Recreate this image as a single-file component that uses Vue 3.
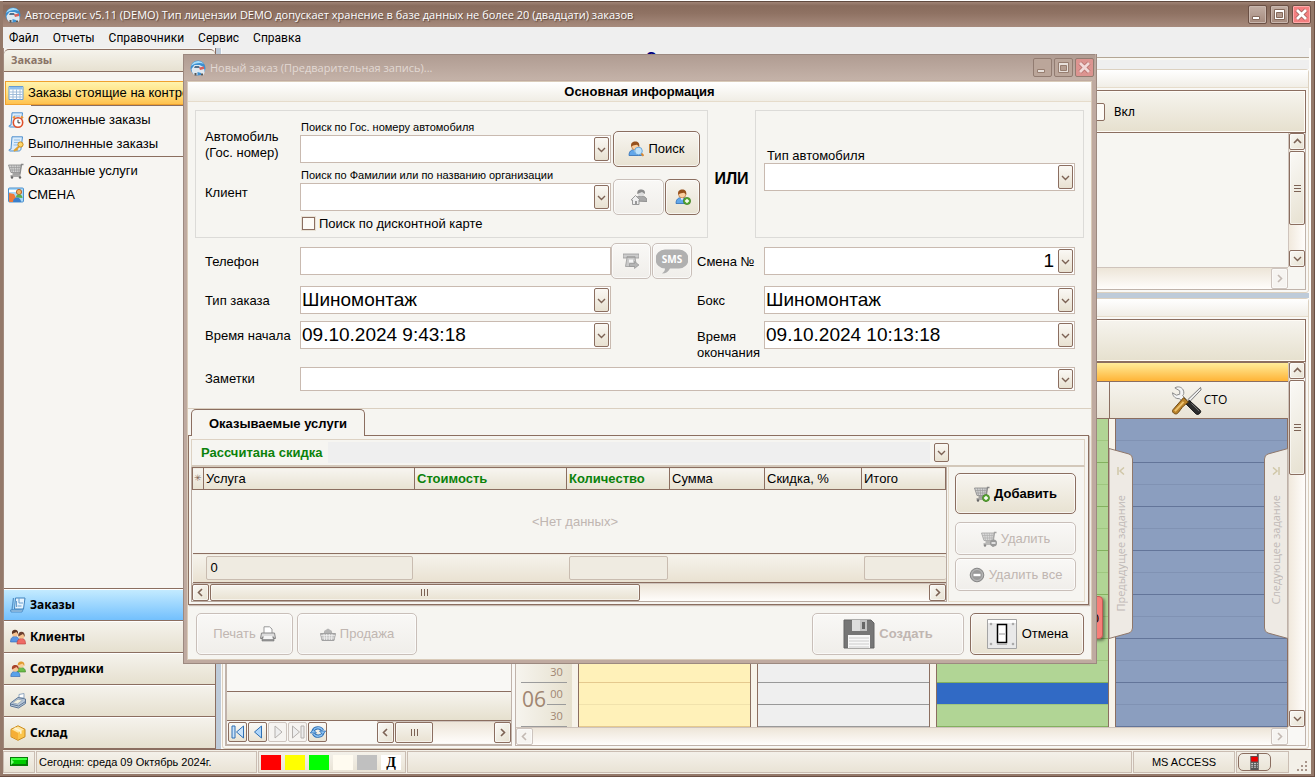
<script setup>
import { ref } from 'vue'

const menu = ['Файл', 'Отчеты', 'Справочники', 'Сервис', 'Справка']
const modules = [
  { id: 'orders', label: 'Заказы', active: true },
  { id: 'clients', label: 'Клиенты' },
  { id: 'staff', label: 'Сотрудники' },
  { id: 'cash', label: 'Касса' },
  { id: 'stock', label: 'Склад' },
]
const hours = ['05', '06']
const resources = [
  { id: 'yellow', label: '' },
  { id: 'gray', label: '' },
  { id: 'green', label: '', selected: 13 },
  { id: 'blue', label: 'СТО' },
]
const swatches = ['red', 'amber', 'lime', 'ivory', 'silver']
const columns = [
  { label: 'Услуга', w: 'c-service' },
  { label: 'Стоимость', w: 'c-cost', strong: true },
  { label: 'Количество', w: 'c-count', strong: true },
  { label: 'Сумма', w: 'c-sum' },
  { label: 'Скидка, %', w: 'c-disc' },
  { label: 'Итого', w: 'c-total' },
]
const discount = ref(false)
const enabled = ref(false)
</script>

<template>
  <div class="screen">
    <svg class="defs" aria-hidden="true">
      <symbol id="down" viewBox="0 0 9 9"><path d="M1 3l3.5 3.5L8 3" fill="none" stroke="currentColor" stroke-width="1.4" /></symbol>
      <symbol id="up" viewBox="0 0 9 9"><path d="M1 6l3.5-3.5L8 6" fill="none" stroke="currentColor" stroke-width="1.6" /></symbol>
      <symbol id="left" viewBox="0 0 9 9"><path d="M6 1L2.5 4.5 6 8" fill="none" stroke="currentColor" stroke-width="1.6" /></symbol>
      <symbol id="right" viewBox="0 0 9 9"><path d="M3 1l3.5 3.5L3 8" fill="none" stroke="currentColor" stroke-width="1.6" /></symbol>
      <symbol id="grip" viewBox="0 0 7 7"><path d="M0 .5h7M0 3.5h7M0 6.5h7" stroke="currentColor" fill="none" /></symbol>
      <symbol id="logo" viewBox="0 0 16 16">
        <circle cx="8" cy="8" r="7.5" fill="#3d8fd0" />
        <path d="M1 6a7.500 7.500 0 0 1 13-2C10 2 5 3 1 6z" fill="#a8dcf8" />
        <path d="M1.500 9l3-4h5l4 2 1 3v3l-1.500 2.500h-2V13l-3.500-1v3H4l-2-3z" fill="#dfe8ef" />
        <path d="M5 6h4l1 2H4z" fill="#53718c" />
        <path d="M9 7.500l5-1v2.500l-4 1z" fill="#d9605a" />
        <path d="M4.500 13h2v2.500h-2zM11 13.500h2v2h-2z" fill="#555" />
      </symbol>
      <symbol id="min" viewBox="0 0 15 15"><path d="M2.5 9.500h7v3h-7z" fill="#fff" stroke="#84695b" /></symbol>
      <symbol id="max" viewBox="0 0 15 15"><path d="M2.500 2.500h10v10h-10z" fill="#fff" stroke="#84695b" /><path d="M4.500 5.500h6v5h-6z" fill="#b39a8d" stroke="#84695b" /></symbol>
      <symbol id="close" viewBox="0 0 15 15"><path d="M3 3l9 9M12 3L3 12" stroke="#a4605c" stroke-width="4.500" /><path d="M3 3l9 9M12 3L3 12" stroke="#fff" stroke-width="2.800" /></symbol>
      <symbol id="cart" viewBox="0 0 16 16">
        <path d="M15.500 1.500h-2l-1.500 9.500H4.500" fill="none" stroke="#888" stroke-width="1.300" />
        <path d="M.5 2h12.500l-1 7.500H3z" fill="#d2d2d2" stroke="#858585" stroke-width=".8" />
        <path d="M3.500 2l1 7.500M6 2l.7 7.500M8.500 2l.3 7.500M11 2l-.3 7.500M1.200 4.500h11.500M2 7h10.300" stroke="#999" stroke-width=".7" />
        <path d="M2.500 13h10" stroke="#888" stroke-width="1.400" />
        <circle cx="4" cy="14.500" r="1.200" fill="#666" /><circle cx="12" cy="14.500" r="1.200" fill="#666" />
      </symbol>
      <symbol id="man" viewBox="0 0 16 16">
        <path d="M1 14.500c0-4 2-6 6-6s6.500 2 6.500 6z" fill="#62a7ea" stroke="#2e6db5" stroke-width=".8" />
        <path d="M5.500 8.500L7 11.500l1.700-3z" fill="#fff" />
        <circle cx="7.200" cy="5.200" r="3.700" fill="#fbcf9f" stroke="#a9632b" stroke-width=".6" />
        <path d="M3.200 5.700C2.600 2 4.600.6 7.300.6S11.800 2.300 11.200 5.700C10 4.700 9.500 3.900 9 3.700 7 4.200 5 3.900 3.200 5.700z" fill="#96501c" />
      </symbol>
      <symbol id="page" viewBox="0 0 16 16">
        <path d="M4 .8h10.500l-1.500 12c-.2 1.500-1 2.200-2.500 2.200H2c-1.200 0-1.500-1.500 0-1.800h1z" fill="#dcecfb" stroke="#4d8fce" />
        <path d="M6 4h6M6 6.500h5.500M5.500 9h5" stroke="#8fbce6" />
      </symbol>
    </svg>

    <div class="app">
      <header class="titlebar">
        <svg class="i16"><use href="#logo" /></svg>
        <h1>Автосервис v5.11 (DEMO) Тип лицензии DEMO допускает хранение в базе данных не более 20 (двадцати) заказов</h1>
        <div class="winbtns">
          <button aria-label="Свернуть"><svg><use href="#min" /></svg></button>
          <button aria-label="Развернуть"><svg><use href="#max" /></svg></button>
          <button class="close" aria-label="Закрыть"><svg><use href="#close" /></svg></button>
        </div>
      </header>
      <nav class="menu"><button v-for="m in menu" :key="m">{{ m }}</button></nav>

      <div class="work">
        <aside class="side">
          <h2>Заказы</h2>
          <div class="links">
            <a href="#" class="on">
              <svg class="i16" viewBox="0 0 16 16"><path d="M1 1.500h14v13H1z" fill="#fff" stroke="#659bd2" /><path d="M1.500 2h13v2.500h-13z" fill="#8fc0ee" /><path d="M1.500 7h13M1.500 9.500h13M1.500 12h13M5 4.500v10M8.500 4.500v10M12 4.500v10" stroke="#9ab7d6" stroke-width=".9" /></svg>
              Заказы стоящие на контроле</a>
            <hr />
            <a href="#"><svg class="i16" viewBox="0 0 16 16"><use href="#page" /><circle cx="10" cy="10.500" r="4.700" fill="#fff" stroke="#e0512b" stroke-width="1.600" /><path d="M10 7.800v3h2.300" fill="none" stroke="#333" /><path d="M5 6l2-1.500M15 6l-2-1.500" stroke="#f0912b" stroke-width="2" /></svg>Отложенные заказы</a>
            <a href="#"><svg class="i16" viewBox="0 0 16 16"><use href="#page" /><circle cx="12.500" cy="8.500" r="2.600" fill="#ffd668" stroke="#c98a1c" /><path d="M11 10.500l-5 4.500M8 12.500l1.500 2" stroke="#e0a02e" stroke-width="2" /></svg>Выполненные заказы</a>
            <hr />
            <a href="#"><svg class="i16"><use href="#cart" /></svg>Оказанные услуги</a>
            <a href="#"><svg class="i16" viewBox="0 0 16 16"><rect x=".5" y="1" width="15" height="14" rx="1" fill="#a9d8f8" stroke="#4a8fcd" /><path d="M1 3h8v2H1z" fill="#fff" /><path d="M1 6l5 1 2 4-3 4H1z" fill="#ee7a3a" /><circle cx="11" cy="5" r="2.600" fill="#f5b35c" stroke="#b7632a" /><path d="M8 10.500c0-2 1-3 3-3s3.500 1 3.500 3.500z" fill="#5fae4a" /><path d="M5 15c0-3 2-4.500 4-4.500s4 1.500 4 4.500z" fill="#3b7fcc" /></svg>СМЕНА</a>
          </div>
          <nav class="modules">
            <button v-for="m in modules" :key="m.id" :class="{ active: m.active }">
              <svg v-if="m.id === 'orders'" class="i16" viewBox="0 0 16 16"><path d="M5.500 1H15l-1.500 11h-9z" fill="#e6f3fd" stroke="#3f82bd" /><path d="M3.500 1L2 13l10 .5" fill="none" stroke="#5794c8" stroke-width="1.300" /><path d="M.5 13h11l2-1.500L12 15H1z" fill="#b3d5ef" stroke="#3f82bd" stroke-width=".8" /><path d="M9 1v5h4M6.500 4v6M7.500 9h4" stroke="#699fce" fill="none" /></svg>
              <svg v-else-if="m.id === 'clients'" class="i16" viewBox="0 0 16 16"><path d="M.5 13c0-4 2-5.500 4.500-5.500S9 9 9 13z" fill="#5a96e4" stroke="#2e62b0" stroke-width=".6" /><path d="M7 15c0-4 2-5.500 4.500-5.500s4 1.500 4 5.500z" fill="#ee6b66" stroke="#b73a36" stroke-width=".6" /><circle cx="5" cy="4.500" r="3" fill="#f6c390" /><path d="M2 5C1.500 2 3 .8 5 .8S8.500 2 8 5L6.500 3z" fill="#5b3524" /><circle cx="11.500" cy="6.500" r="3" fill="#f6c390" /><path d="M8.300 7.500c-.5-3 1-4.700 3.200-4.700S15 4.500 14.700 8L13 5z" fill="#6d4131" /></svg>
              <svg v-else-if="m.id === 'staff'" class="i16" viewBox="0 0 16 16"><path d="M7 11c0-4 2-4.500 4-4.500s4.500 1 4.500 4.500z" fill="#6cbd4a" stroke="#3c8426" stroke-width=".6" /><circle cx="11" cy="4" r="2.800" fill="#f9cf98" /><path d="M7.700 4.500C7.500 1.500 9 .4 11 .4S15 1.500 14.300 5L12.500 2.500z" fill="#e09a2f" /><path d="M.8 15.500c0-4 2-5 4.500-5s4.700 1 4.700 5z" fill="#5aa2ea" stroke="#2e62b0" stroke-width=".6" /><circle cx="5.300" cy="7.800" r="3" fill="#f8c796" /><path d="M2 8.500C1.500 5 3 4 5.300 4S9 5 8.600 8.500L6.500 6z" fill="#a9442a" /></svg>
              <svg v-else-if="m.id === 'cash'" class="i16" viewBox="0 0 16 16"><path d="M9 5V1.500l5-1V5z" fill="#fff" stroke="#8fa5bd" /><path d="M.5 10L8 4.500l7.500 1.500v4.500L8.500 15 .5 13z" fill="#b9c7d7" stroke="#5e7796" /><path d="M2.500 9.700l5.500-3.500 4.500 1-5 3.800z" fill="#f4f1de" stroke="#7f95ae" stroke-width=".6" /><path d="M.5 11l8 2 7-4.500" stroke="#5e7796" fill="none" /></svg>
              <svg v-else class="i16" viewBox="0 0 16 16"><path d="M8 .8l7 3.500v7.500L8 15.300 1 11.800V4.300z" fill="#fbc54c" stroke="#c98a1e" /><path d="M8 1.500l6 3L8 7.800l-6-3.300z" fill="#fee6a4" /><path d="M8 8v7l-6.500-3.500V4.700z" fill="#f5ae36" /><path d="M4.500 3l6.300 3.200v2.500" stroke="#fff5d5" stroke-width="1.500" fill="none" /></svg>
              {{ m.label }}
            </button>
          </nav>
        </aside>

        <main class="main">
          <div class="caption"><strong>С</strong></div>

          <section class="panel upper">
            <div class="panel-title"></div>
            <div class="box">
              <div class="toolbar"><label class="enable"><input type="checkbox" v-model="enabled" />Вкл</label></div>
              <div class="list">
                <div class="canvas"></div>
                <div class="vscroll">
                  <button aria-label="Вверх"><svg><use href="#up" /></svg></button>
                  <div class="thumb t1"><svg><use href="#grip" /></svg></div>
                  <div class="track"></div>
                  <button aria-label="Вниз"><svg><use href="#down" /></svg></button>
                </div>
                <div class="hscroll tall off"><div class="track"></div><button disabled aria-label="Вправо"><svg><use href="#right" /></svg></button></div>
              </div>
            </div>
          </section>

          <div class="hsplit"></div>

          <section class="panel lower">
            <div class="panel-title"></div>
            <div class="box bare"><div class="toolbar"></div></div>
            <div class="split">
              <div class="grid">
                <div class="grid-body"></div>
                <div class="grid-foot"></div>
                <div class="navigator">
                  <button aria-label="Первая"><svg viewBox="0 0 16 16"><path d="M2 2h3v12H2zM13.500 2v12l-7-6z" fill="#c9e3fb" stroke="#2e6fb3" /></svg></button>
                  <button aria-label="Назад"><svg viewBox="0 0 16 16"><path d="M11.500 2v12l-7-6z" fill="#aed6fb" stroke="#2e6fb3" /></svg></button>
                  <button disabled aria-label="Вперёд"><svg viewBox="0 0 16 16"><path d="M5 2v12l7-6z" fill="#eee" stroke="#b4b0ad" /></svg></button>
                  <button disabled aria-label="Последняя"><svg viewBox="0 0 16 16"><path d="M2.500 2v12l7-6zM11 2h3v12h-3z" fill="#eee" stroke="#b4b0ad" /></svg></button>
                  <button aria-label="Обновить"><svg viewBox="0 0 16 16"><path d="M3 7.500a5 4.500 0 0 1 9.500-1M13 8.500a5 4.500 0 0 1-9.500 1" fill="none" stroke="#2e6fb3" stroke-width="3.200" /><path d="M3 7.500a5 4.500 0 0 1 9.500-1M13 8.500a5 4.500 0 0 1-9.500 1" fill="none" stroke="#8fc4f4" stroke-width="1.400" /><path d="M9.500 7h6.200l-3 3.500zM.3 9h6.200L3.300 5.500z" fill="#8fc4f4" stroke="#2e6fb3" stroke-width=".8" /></svg></button>
                  <div class="hscroll nav-scroll">
                    <button aria-label="Влево"><svg><use href="#left" /></svg></button>
                    <div class="thumb"><svg class="turn"><use href="#grip" /></svg></div>
                    <div class="track"></div>
                    <button aria-label="Вправо"><svg><use href="#right" /></svg></button>
                  </div>
                </div>
              </div>

              <div class="sched">
                <div class="sched-view">
                  <div class="allday"></div>
                  <div class="cols">
                    <div class="times">
                      <div class="res-head"></div>
                      <div v-for="n in 5" :key="n" class="hour"></div>
                      <div v-for="h in hours" :key="h" class="hour"><b>{{ h }}</b><span class="full">00</span><span>30</span></div>
                    </div>
                    <div v-for="r in resources" :key="r.id" class="res" :class="r.id">
                      <div class="res-head">
                        <svg v-if="r.label" class="tools" viewBox="0 0 32 32">
                          <path d="M4 3c3-2 7-1 8.500 2s.5 5-.5 6l4 4-3 3-4.500-4C5 14.500 2 12 1.500 8l4 2.500 3.500-1V6z" fill="#f4f4f4" stroke="#888" />
                          <path d="M30.500 2.500L17.500 15l2 2L31 5z" fill="#eee" stroke="#777" />
                          <path d="M19 16l11.500 10.500c1 2-2.500 5-4.500 3.500L15 19z" fill="#2c2c2c" stroke="#111" />
                          <path d="M21 19l8 8" stroke="#777" />
                          <path d="M13 13l5 4.500-3 2.500C12 22 11 24 7.500 28.500 5 32 0 28 2 25.500z" fill="#b9822a" stroke="#68430e" />
                          <path d="M4 27l9-9.500" stroke="#edc26e" stroke-width="2" />
                        </svg>{{ r.label }}
                      </div>
                      <div class="slots">
                        <i v-for="n in 14" :key="n" :class="{ sel: r.selected === n }"></i>
                        <div v-if="r.id === 'green'" class="event">10:00</div>
                      </div>
                      <template v-if="r.id === 'blue'">
                        <button class="jump prev" disabled>
                          <svg class="shape" viewBox="0 0 24 192" preserveAspectRatio="none"><path d="M0 .5l20 5.500q3.500 1 3.500 5v169q0 4-3.500 5L0 190.500z" fill="#eeeae4" stroke="#8f786b" /></svg>
                          <svg class="arrow" viewBox="0 0 8 8"><path d="M1 0v8M7 .5L3 4l4 3.500" fill="none" stroke="#d0c7a8" stroke-width="1.500" /></svg>
                          <span>Предыдущее задание</span>
                        </button>
                        <button class="jump next" disabled>
                          <svg class="shape" viewBox="0 0 24 192" preserveAspectRatio="none"><path d="M24 .5L4 6Q.5 7 .5 11v169q0 4 3.500 5l20 5.500z" fill="#eeeae4" stroke="#8f786b" /></svg>
                          <svg class="arrow" viewBox="0 0 8 8"><path d="M7 0v8M1 .5L5 4 1 7.500" fill="none" stroke="#d0c7a8" stroke-width="1.500" /></svg>
                          <span>Следующее задание</span>
                        </button>
                      </template>
                    </div>
                  </div>
                </div>
                <div class="vscroll">
                  <button aria-label="Вверх"><svg><use href="#up" /></svg></button>
                  <div class="thumb t2"><svg><use href="#grip" /></svg></div>
                  <div class="track"></div>
                  <button aria-label="Вниз"><svg><use href="#down" /></svg></button>
                </div>
                <div class="hscroll off">
                  <button disabled aria-label="Влево"><svg><use href="#left" /></svg></button>
                  <div class="track"></div>
                  <button disabled aria-label="Вправо"><svg><use href="#right" /></svg></button>
                </div>
              </div>
            </div>
          </section>
        </main>
      </div>

      <footer class="status">
        <div class="cell led"><svg viewBox="0 0 18 10"><path d="M0 0h18v9H0z" fill="#067d06" /><path d="M1 1h16v2H1z" fill="#3dff3d" /><path d="M1 3h15v4H1z" fill="#0c0" /><path d="M1 2l3 3-3 3z" fill="#7dff7d" /></svg></div>
        <div class="cell today">Сегодня: среда 09 Октябрь 2024г.</div>
        <div class="cell colors"><button v-for="s in swatches" :key="s" :class="s" :aria-label="s"></button><button class="letter">Д</button></div>
        <div class="cell fill"></div>
        <div class="cell db">MS ACCESS</div>
        <div class="cell phone"><button aria-label="Телефон"><svg viewBox="0 0 10 17"><path d="M0 2h7V0h2v17H0z" fill="#555" /><path d="M1 3h7v5H1z" fill="#e00" /><path d="M1 10h2M4 10h2M7 10h1M1 12h2M4 12h2M7 12h1M1 14h2M4 14h2M7 14h1" stroke="#ddd" /></svg></button></div>
        <svg class="corner" viewBox="0 0 12 12"><path d="M9 1h2v2H9zM5 5h2v2H5zM9 5h2v2H9zM1 9h2v2H1zM5 9h2v2H5zM9 9h2v2H9z" fill="#a8968b" /></svg>
      </footer>
    </div>

    <div class="dialog" role="dialog" aria-labelledby="dlg">
      <header class="titlebar inactive">
        <svg class="i16"><use href="#logo" /></svg>
        <h2 id="dlg">Новый заказ (Предварительная запись)...</h2>
        <div class="winbtns">
          <button aria-label="Свернуть"><svg><use href="#min" /></svg></button>
          <button aria-label="Развернуть"><svg><use href="#max" /></svg></button>
          <button class="close" aria-label="Закрыть"><svg><use href="#close" /></svg></button>
        </div>
      </header>
      <form class="form" @submit.prevent>
        <h3>Основная информация</h3>
        <div class="info">
          <div class="who">
            <fieldset class="search">
              <label class="lbl" for="car">Автомобиль<br />(Гос. номер)</label>
              <div class="field">
                <label class="hint" for="car">Поиск по Гос. номеру автомобиля</label>
                <div class="combo"><select id="car"><option></option></select><span class="dd"><svg><use href="#down" /></svg></span></div>
              </div>
              <div class="btns">
                <button type="button" class="btn find"><svg class="i16" viewBox="0 0 16 16"><use href="#man" /><circle cx="10.500" cy="10" r="3.800" fill="#bfe2fa" stroke="#6aa7da" /><path d="M13.500 12.500l2 2.500" stroke="#d98832" stroke-width="2" /></svg>Поиск</button>
              </div>
              <label class="lbl" for="client">Клиент</label>
              <div class="field">
                <label class="hint" for="client">Поиск по Фамилии или по названию организации</label>
                <div class="combo"><select id="client"><option></option></select><span class="dd"><svg><use href="#down" /></svg></span></div>
              </div>
              <div class="btns">
                <button type="button" class="btn home" disabled aria-label="Карточка клиента"><svg class="i16" viewBox="0 0 16 16"><path d="M4.500 12c0-3.500 2-5 5.500-5s6 1.500 6 5.500z" fill="#a9a9a9" stroke="#909090" /><circle cx="10" cy="4" r="3.200" fill="#ddd" /><path d="M6.300 5C6 1.500 7.500.4 10 .4s4.500 1 3.900 4.600L11 3z" fill="#8c8c8c" /><path d="M0 11l4.500-4.500L9 11H8v4.500H1.500V11z" fill="#eee" stroke="#999" /><path d="M4 12h2v3.500H4z" fill="#999" /></svg></button>
                <button type="button" class="btn plus" aria-label="Добавить клиента"><svg class="i16" viewBox="0 0 16 16"><use href="#man" /><circle cx="12" cy="12" r="3.600" fill="#5cab35" stroke="#397a1c" stroke-width=".7" /><path d="M12 10v4M10 12h4" stroke="#fff" stroke-width="1.400" /></svg></button>
              </div>
              <label class="check"><input type="checkbox" v-model="discount" />Поиск по дисконтной карте</label>
            </fieldset>
            <strong class="or">ИЛИ</strong>
            <fieldset class="type">
              <label for="cartype">Тип автомобиля</label>
              <div class="combo"><select id="cartype"><option></option></select><span class="dd"><svg><use href="#down" /></svg></span></div>
            </fieldset>
          </div>

          <div class="rows">
            <label for="phone">Телефон</label>
            <input id="phone" class="text" type="text" />
            <div class="calls">
              <button type="button" class="btn" disabled aria-label="Позвонить"><svg class="i16" viewBox="0 0 16 16"><path d="M0 1h16v4h-4V3.500H4V5H0z" fill="#ccc" stroke="#999" stroke-width=".8" /><path d="M4 4.500h8l1.500 9h-11z" fill="#c9c9c9" stroke="#999" stroke-width=".8" /><path d="M6 6.500h4v3H6z" fill="#f5f5f5" /><path d="M6.500 10.500h5v-2L16 12l-4.500 3.500v-2h-5z" fill="#b5b5b5" stroke="#909090" stroke-width=".6" /></svg></button>
              <button type="button" class="btn sms" disabled aria-label="SMS"><svg viewBox="0 0 32 25"><path d="M9 .5h14a9.500 9.500 0 0 1 0 19H14c-1.500 3-4 5-8 5 2-1.500 3-3 3-5A9.500 9.500 0 0 1 9 .5z" fill="#b0b0b0" /><text x="16" y="13.500" text-anchor="middle">SMS</text></svg></button>
            </div>
            <label for="shift">Смена №</label>
            <div class="combo num"><select id="shift"><option>1</option></select><span class="dd"><svg><use href="#down" /></svg></span></div>

            <label for="kind">Тип заказа</label>
            <div class="combo"><select id="kind"><option>Шиномонтаж</option></select><span class="dd"><svg><use href="#down" /></svg></span></div>
            <label class="c4" for="bay">Бокс</label>
            <div class="combo"><select id="bay"><option>Шиномонтаж</option></select><span class="dd"><svg><use href="#down" /></svg></span></div>

            <label for="start">Время начала</label>
            <div class="combo"><select id="start"><option>09.10.2024 9:43:18</option></select><span class="dd"><svg><use href="#down" /></svg></span></div>
            <label class="c4 two" for="end">Время<br />окончания</label>
            <div class="combo"><select id="end"><option>09.10.2024 10:13:18</option></select><span class="dd"><svg><use href="#down" /></svg></span></div>

            <label class="low" for="notes">Заметки</label>
            <div class="combo wide"><select id="notes"><option></option></select><span class="dd"><svg><use href="#down" /></svg></span></div>
          </div>
        </div>

        <div class="tabs"><button type="button" role="tab" aria-selected="true">Оказываемые услуги</button></div>
        <div class="sheet">
          <div class="disc">
            <label for="disc">Рассчитана скидка</label>
            <div class="combo flat"><select id="disc"><option></option></select><span class="dd"><svg><use href="#down" /></svg></span></div>
          </div>
          <div class="services">
            <div class="tablebox">
              <table>
                <colgroup><col class="c-mark" /><col v-for="c in columns" :key="c.w" :class="c.w" /></colgroup>
                <thead><tr><th class="mark">✳</th><th v-for="c in columns" :key="c.w" :class="{ strong: c.strong }">{{ c.label }}</th></tr></thead>
                <tbody><tr><td colspan="7">&lt;Нет данных&gt;</td></tr></tbody>
                <tfoot><tr><td></td><td><span>0</span></td><td></td><td><span></span></td><td></td><td></td><td><span class="open"></span></td></tr></tfoot>
              </table>
              <div class="hscroll inner">
                <button type="button" aria-label="Влево"><svg><use href="#left" /></svg></button>
                <div class="thumb"><svg class="turn"><use href="#grip" /></svg></div>
                <div class="track"></div>
                <button type="button" aria-label="Вправо"><svg><use href="#right" /></svg></button>
              </div>
            </div>
            <div class="actions">
              <button type="button" class="btn add"><svg class="i16" viewBox="0 0 16 16"><use href="#cart" /><circle cx="12" cy="12" r="3.500" fill="#5cab35" stroke="#397a1c" stroke-width=".7" /><path d="M12 10v4M10 12h4" stroke="#fff" stroke-width="1.400" /></svg>Добавить</button>
              <button type="button" class="btn" disabled><svg class="i16" viewBox="0 0 16 16"><use href="#cart" opacity=".75" /><circle cx="12.500" cy="12" r="3.500" fill="#999" /><path d="M10.500 12h4" stroke="#fff" stroke-width="1.400" /></svg>Удалить</button>
              <button type="button" class="btn" disabled><svg class="i16" viewBox="0 0 16 16"><circle cx="8" cy="8" r="6.800" fill="#9a9a9a" stroke="#888" /><circle cx="8" cy="8" r="5.500" fill="none" stroke="#bbb" /><path d="M4.500 8h7" stroke="#fff" stroke-width="2.400" /></svg>Удалить все</button>
            </div>
          </div>
        </div>

        <div class="foot">
          <button type="button" class="btn print" disabled>Печать<svg class="i16" viewBox="0 0 16 16"><path d="M4 7V.8h5.500L12 3v4" fill="#fff" stroke="#999" /><path d="M1.500 7h13l1 5.500h-15z" fill="#ddd" stroke="#888" /><path d="M2 11h12v4H2z" fill="#999" stroke="#777" stroke-width=".6" /><path d="M4 10h8l1 3H3z" fill="#f5f5f5" /></svg></button>
          <button type="button" class="btn sale" disabled><svg class="i16" viewBox="0 0 16 16"><path d="M3 8q5-7 10 0" fill="none" stroke="#999" /><path d="M4.500 8L4 5l4-2.500L12 5l-.5 3z" fill="#b5b5b5" /><path d="M.5 7.500h15L14 14.500H2z" fill="#bbb" stroke="#a2a2a2" /><path d="M4 8l.5 6M6.700 8v6M9.300 8v6M12 8l-.5 6M1 9.700h14M1.500 12h13" stroke="#f5f5f5" stroke-width=".8" /></svg>Продажа</button>
          <button type="submit" class="btn create" disabled><svg class="i32" viewBox="0 0 32 32"><path d="M1 2h27l3 3v25H1z" fill="#767676" stroke="#646464" /><path d="M9 2h15v11H9z" fill="#ddd" /><path d="M17 2h7v11h-7z" fill="#c2c2c2" /><path d="M19 4h3v7h-3z" fill="#666" /><path d="M5 17h22v13H5z" fill="#f8f8f8" /><path d="M6 20h20M6 23h20M6 26h20M6 29h20" stroke="#ccc" /></svg>Создать</button>
          <button type="button" class="btn cancel"><svg class="i32" viewBox="0 0 32 32"><path d="M1.500 1.500h29v29h-29z" fill="#e9e9e9" stroke="#a4a4a4" /><path d="M2 2h28v3H2z" fill="#fff" /><path d="M11.500 6.500h9v18h-9z" fill="#fff" stroke="#000" stroke-width="1.500" /><path d="M12.500 15h7v2h-7z" fill="#ccc" /><path d="M11 26.500h10" stroke="#b5b5b5" /><g fill="#aaa"><circle cx="5" cy="6" r="1.300" /><circle cx="27" cy="6" r="1.300" /><circle cx="5" cy="26" r="1.300" /><circle cx="27" cy="26" r="1.300" /></g></svg>Отмена</button>
        </div>
      </form>
    </div>
  </div>
</template>

<style>
html, body { height: 100%; background: #fff; }
</style>

<style scoped>
* { box-sizing: border-box; }
button, input, select { font: inherit; color: inherit; margin: 0; padding: 0; }
button { border: 0; background: none; }
h1, h2, h3 { margin: 0; font-weight: normal; font-size: inherit; }
svg { display: block; flex: none; }
.defs { position: absolute; width: 0; height: 0; }
.i16 { width: 16px; height: 16px; }
.i32 { width: 32px; height: 32px; }

.screen { position: relative; min-width: 1100px; height: 100vh; min-height: 760px; padding: 1px 1px 1px 0; overflow: hidden; font: 13px/16px "Liberation Sans", Arial, sans-serif; color: #000; }
.app { height: 100%; display: flex; flex-direction: column; padding: 0 3px 2px; background: #94796a; border-right: 1px solid #6a4f43; border-bottom: 1px solid #6a4f43; }

.titlebar { display: flex; align-items: center; height: 26px; padding: 0 0 0 2px; gap: 4px; flex: none; color: #fff; font: 11px/16px "Open Sans", "Noto Sans", sans-serif; background: linear-gradient(#a08476, #896c5d 15%, #8f7263 45%, #a78b7d); border-top: 1px solid #614a3f; text-shadow: 1px 1px 1px #5b473e; }
.titlebar.inactive { color: #e2d9d4; background: linear-gradient(#b09c92, #c4b2a8); border-top-color: #9c8980; padding-left: 6px; text-shadow: none; }
.winbtns { display: flex; gap: 3px; margin-left: auto; }
.winbtns button { width: 19px; height: 19px; padding: 1px; border: 1px solid #6b5045; border-radius: 2px; background: linear-gradient(#c2aea4, #a58a7d); box-shadow: inset 0 0 0 1px #c9b7ae; }
.winbtns svg { width: 15px; height: 15px; }
.winbtns .close { background: #f47f80; box-shadow: inset 0 0 0 1px #ffabab; }
.inactive .winbtns { gap: 2px; padding-right: 1px; }
.inactive .winbtns button { border-color: #927c71; background: #bba69a; box-shadow: none; }
.inactive .winbtns .close { background: #dc9490; }
.inactive .winbtns svg { opacity: .65; }

.menu { display: flex; gap: 14px; height: 21px; padding: 0 6px; background: #efefef; flex: none; font: 12px/20px Roboto, "Noto Sans", sans-serif; }
.work { flex: 1; display: flex; min-height: 0; background: #f6f5f1; }

.side { width: 213px; flex: none; display: flex; flex-direction: column; border: solid #8b6e60; border-width: 0 1px 1px; border-left-color: #a0897d; background: #f7f5f2; }
.side h2 { height: 23px; padding: 0 7px; margin-top: 1px; border: 1px solid #8b6e60; border-width: 1px 0; border-radius: 5px 5px 0 0; background: linear-gradient(#f5f3ec, #e7e1d1); color: #8a7467; font: bold 11px/20px "Noto Sans", sans-serif; }
.links { flex: 1; padding: 9px 1px; display: flex; flex-direction: column; }
.links a { display: flex; align-items: center; gap: 4px; height: 24px; padding: 0 3px; color: #000; text-decoration: none; white-space: nowrap; }
.links a.on { border: 1px solid #efa12f; padding: 0 2px; background: linear-gradient(#fff3ad, #ffe182 50%, #ffc14e); }
.links hr { width: 183px; height: 1px; margin: 0 0 2px auto; border: 0; background: #8b6e60; flex: none; }
.modules { display: flex; flex-direction: column; }
.modules button { height: 32px; display: flex; align-items: center; gap: 4px; padding: 0 6px; border-top: 1px solid #8b6e60; background: linear-gradient(#f5f3ed, #e6e0cf); box-shadow: inset 0 1px #fff; font: bold 12px/16px "Noto Sans", sans-serif; text-align: left; }
.modules .active { background: linear-gradient(#c6ecff, #73c0fd); }

.main { flex: 1; min-width: 0; display: flex; flex-direction: column; border-left: 5px solid #becbd9; padding: 0 2px 0 1px; background: #fbfaf8; }
.caption { height: 21px; flex: none; padding-left: 39%; overflow: hidden; background: linear-gradient(#efefef 9px, #b3a694 9px 10px, #f8f7f2 10px 12px, #efefef 12px); }
.caption strong { color: #000080; font-size: 14px; line-height: 18px; }
.panel { border: 1px solid #dcd1c0; border-radius: 3px; padding: 0 2px 2px; background: #f9f8f5; display: flex; flex-direction: column; }
.panel-title { height: 18px; margin: 0 -2px 2px; flex: none; border-bottom: 1px solid #e6dccb; background: linear-gradient(#fff, #f1eee7); }
.upper { height: 224px; flex: none; }
.box { display: flex; flex-direction: column; flex: 1; border: 1px solid #c0b3aa; background: #f7f6f2; }
.box.bare { flex: none; border: 0; }
.toolbar { height: 43px; flex: none; display: flex; align-items: center; justify-content: flex-end; padding-right: 170px; border: 1px solid #8b6e60; background: linear-gradient(#f6f4ee, #e6e0ce); box-shadow: inset 0 0 0 1px #fffcf6; font: 12px/16px Roboto, "Noto Sans", sans-serif; }
.box > .toolbar { margin: -1px -1px 0; }
.bare > .toolbar { margin: 0; }
.enable { display: flex; align-items: center; gap: 9px; }
input[type=checkbox] { appearance: none; background: #fdfbf7; border: 1px solid #8b6e60; }
.enable input { width: 18px; height: 18px; border-radius: 2px; }
.list { flex: 1; display: grid; grid-template: 1fr 22px / 1fr 17px; }
.hsplit { height: 5px; flex: none; background: #becbd9; }
.lower { flex: 1; min-height: 0; }
.split { flex: 1; min-height: 0; display: flex; gap: 3px; }

.vscroll { display: flex; flex-direction: column; width: 17px; background: linear-gradient(90deg, #f1e9dd, #fffdfb); border-left: 1px solid #cfc4bc; }
.hscroll { display: flex; height: 18px; background: linear-gradient(#ede5d8, #fffdfb); border-top: 1px solid #cfc4bc; min-width: 0; }
.hscroll.tall { height: 22px; }
.track { flex: 1; }
.vscroll button, .hscroll button, .thumb { display: grid; place-items: center; flex: none; border: 1px solid #8b6e60; border-radius: 2px; color: #7c6254; background: linear-gradient(135deg, #faf9f6, #e7e1d1); box-shadow: inset 0 0 0 1px #fff8; }
.vscroll button { height: 17px; }
.hscroll button { width: 17px; }
.vscroll button svg, .hscroll button svg { width: 9px; height: 9px; }
.hscroll.off button { border-color: #cdc4be; color: #c3b9b3; background: #f6f4f1; }
.thumb svg { width: 7px; height: 7px; }
.thumb .turn { transform: rotate(90deg); }
.thumb { margin: 1px 0; }
.hscroll .thumb { margin: 0 1px; background: linear-gradient(#f6f4ee, #e9e2d2); }
.t1 { height: 74px; }
.t2 { height: 95px; }

.grid { width: 287px; flex: none; display: flex; flex-direction: column; border: 1px solid #c0b3aa; border-width: 0 1px 2px 2px; }
.grid-body { flex: 1; }
.grid-foot { height: 30px; border: 1px solid #8b6e60; border-width: 1px 0; background: linear-gradient(#f6f4ee, #e6e0ce); }
.navigator { display: flex; gap: 1px; height: 23px; padding: 1px; }
.navigator > button { width: 19px; height: 20px; padding: 1px 0; display: grid; place-items: center; border: 1px solid #8b6e60; border-radius: 2px; background: linear-gradient(#fbfaf7, #e9e3d4); }
.navigator > button:disabled { border-color: #cdc4be; background: #f6f4f1; }
.navigator > button svg { width: 16px; height: 16px; }
.nav-scroll { width: 134px; margin: -1px -1px 0 auto; height: 22px; }
.nav-scroll .thumb { width: 38px; }

.sched { flex: 1; min-width: 0; display: grid; grid-template: minmax(0, 1fr) 18px / minmax(0, 1fr) 17px; border: 1px solid #c0b3aa; border-width: 0 1px 1px; }
.sched-view { display: flex; flex-direction: column; min-height: 0; overflow: hidden; }
.allday { height: 19px; flex: none; border-top: 1px solid #8b6e60; background: linear-gradient(#ffec9a, #ffb437); }
.cols { flex: 1; display: flex; min-height: 0; }
.times { width: 56px; flex: none; background: linear-gradient(90deg, #f6f4ee, #e6e0ce); color: #a08672; font: 11px/22px "Open Sans", "Noto Sans", sans-serif; }
.hour { display: grid; grid-template: 22px 22px / 26px 19px; margin: 0 5px; border-bottom: 1px solid #9b9b9b; height: 44px; text-align: center; }
.hour b { grid-row: 1 / 3; font: 21px/26px "Open Sans", "Noto Sans", sans-serif; padding-top: 3px; align-self: start; }
.hour .full { border-bottom: 1px solid #9b9b9b; }
.res { flex: 1; min-width: 0; position: relative; display: flex; flex-direction: column; background: #f7f3ea; }
.res-head { height: 38px; flex: none; display: flex; align-items: center; justify-content: center; gap: 2px; border: 1px solid #8b6e60; border-width: 1px 0 1px 1px; background: linear-gradient(#f6f4ee, #e9e3d5); color: #000; font: 12px/16px "Open Sans", "Noto Sans", sans-serif; }
.tools { width: 31px; height: 31px; }
.slots { position: relative; flex: 1; margin: 0 1px 0 6px; border-left: 1px solid #8b6e60; box-shadow: 1px 0 #8b6e60; min-height: 0; display: flex; flex-direction: column; }
.slots i { height: 22px; flex: none; border-bottom: 1px solid; }
.yellow i { background: #fff1b9; border-color: #f1e2ac; }
.yellow i:nth-child(even) { border-color: #e5c98e; }
.gray i { background: #efefef; border-color: #999; }
.green i { background: #b1d595; border-color: #9fc67f; }
.green i:nth-child(even) { border-color: #83b05f; }
.green i.sel { background: #316ac5; }
.blue i { background: #8b9ebf; border-color: #8092b3; }
.blue i:nth-child(even) { border-color: #637599; }
.event { position: absolute; right: 5px; top: 177px; width: 120px; height: 43px; padding: 14px 3px; border: 1px solid #c25c55; border-radius: 4px; background: #f77f79; box-shadow: 2px 2px 3px #0006; text-align: right; }
.jump { position: absolute; top: 67px; width: 24px; height: 192px; color: #bfb9b6; font: 11px/14px "Open Sans", "Noto Sans", sans-serif; display: flex; flex-direction: column; align-items: center; gap: 20px; padding-top: 19px; }
.prev { left: 0; }
.next { right: 0; }
.shape { position: absolute; inset: 0; width: 100%; height: 100%; }
.arrow { position: relative; width: 8px; height: 8px; }
.jump span { position: relative; writing-mode: vertical-rl; transform: rotate(180deg); white-space: nowrap; }

.status { flex: none; display: flex; gap: 1px; height: 25px; padding: 1px 0; border-top: 1px solid #8b6e60; background: #f3f0e8; font: 11px/14px "Liberation Sans", Arial, sans-serif; }
.cell { display: flex; align-items: center; border: 1px solid #cabdb2; background: linear-gradient(#f4f1ea, #e9e3d5); }
.led { width: 32px; justify-content: center; }
.led svg { width: 18px; height: 10px; }
.today { width: 221px; padding-left: 2px; }
.colors { width: 148px; gap: 4px; padding-left: 2px; }
.colors button { width: 20px; height: 15px; }
.red { background: #f00; }
.amber { background: #ff0; }
.lime { background: #0f0; }
.ivory { background: #fffbf0; }
.silver { background: #c0c0c0; }
.colors .letter { background: #fff; font: bold 14px/15px "Liberation Serif", serif; }
.fill { flex: 1; }
.db { width: 102px; justify-content: center; }
.phone { width: 53px; padding: 0 1px; }
.phone button { width: 33px; height: 18px; display: grid; place-items: center; border: 1px solid #8b6e60; border-radius: 5px; }
.phone svg { width: 10px; height: 16px; }
.corner { width: 12px; height: 12px; margin: 9px 3px 0 6px; }

.dialog { position: absolute; left: 183px; right: 219px; top: 54px; padding: 0 4px 3px 3px; background: #bfaaa0; border: 1px solid #9c8980; border-top: 0; }
.dialog .titlebar { margin: 0 -3px; }
.form { border: 1px solid #d9cbb9; background: #f6f5f1; margin-top: 1px; }
.form h3 { height: 20px; border-bottom: 1px solid #e6dccb; background: linear-gradient(#fff, #f0ede5); font-weight: bold; line-height: 20px; text-align: center; }
.info { padding: 8px 7px 17px; border-bottom: 1px solid #dacfc0; }
.who { display: grid; grid-template-columns: minmax(0, 513fr) 47px minmax(0, 329fr); }
fieldset { margin: 0; border: 1px solid #dcdbd8; min-width: 0; }
.search { display: grid; grid-template: 44px 44px 17px / 95px minmax(0, 1fr) 87px; padding: 8px 7px 5px 9px; row-gap: 4px; }
.lbl { align-self: center; padding-top: 8px; }
.field { padding-right: 2px; }
.hint { display: block; height: 16px; padding-left: 1px; font-size: 11px; line-height: 16px; white-space: nowrap; }
.btns { display: flex; gap: 1px; align-items: end; }
.check { grid-column: 2; display: flex; align-items: center; gap: 4px; padding-left: 2px; }
.check input { width: 13px; height: 13px; box-shadow: 0 0 0 1px #e8e1d5; }
.combo { position: relative; height: 28px; }
.combo select, .text { width: 100%; height: 100%; appearance: none; border: 1px solid #c9bab0; border-radius: 0; background: #fff; padding: 0 20px 0 1px; font-size: 19px; outline: 0; }
.num select { text-align-last: right; }
.dd { position: absolute; right: 2px; top: 2px; bottom: 2px; width: 15px; display: grid; place-items: center; border: 1px solid #8b6e60; border-radius: 2px; background: linear-gradient(#faf8f4, #e8e1d1); color: #7c6254; pointer-events: none; }
.dd svg { width: 9px; height: 9px; }
.btn { display: flex; align-items: center; justify-content: center; gap: 4px; border: 1px solid #8b6e60; border-radius: 5px; background: linear-gradient(#f7f5f0, #e8e2d2); box-shadow: inset 0 0 0 1px #fffa; }
.btn:disabled { border-color: #c9bfb9; color: #c0b6b1; background: linear-gradient(#f9f8f6, #f0eeea); }
.btns .btn { height: 36px; margin-bottom: -4px; }
.find { width: 87px; }
.home { width: 51px; }
.plus { width: 35px; }
.or { align-self: center; text-align: center; font-size: 16px; padding-top: 10px; }
.type { padding: 37px 8px 0; }
.type label { display: block; padding-left: 3px; height: 15px; }
.rows { display: grid; grid-template: 36px 28px 28px 35px / 95px minmax(0, 1fr) 86px 67px minmax(0, 1fr); row-gap: 7px; padding: 5px 9px 0 10px; align-items: center; }
.rows > label { padding-top: 2px; }
.rows .text { height: 28px; }
.c4 { grid-column: 4; }
.rows > .two { align-self: start; padding-top: 8px; }
.calls { display: flex; gap: 1px; height: 36px; }
.calls .btn { width: 40px; }
.sms svg { width: 32px; height: 25px; }
.sms text { font: bold 10px "Open Sans", sans-serif; fill: #fff; }
.wide { grid-column: 2 / 6; height: 24px; align-self: end; }
.low { align-self: end; line-height: 24px; }

.tabs { display: flex; padding: 0 3px; height: 26px; position: relative; }
.tabs button { height: 27px; width: 174px; padding-top: 2px; border: 1px solid #8b6e60; border-bottom: 0; border-radius: 5px 5px 0 0; background: #f6f5f1; font-weight: bold; }
.sheet { margin-right: 2px; border: 1px solid #8b6e60; padding: 3px 3px 2px 2px; box-shadow: 1px 1px 1px #c7bbb2; }
.disc { display: flex; align-items: center; height: 28px; padding: 2px 135px 2px 9px; border: 1px solid #ddd2c3; border-bottom: 2px solid #d3c8ba; }
.disc label { color: #0b820b; font-weight: bold; width: 127px; white-space: nowrap; }
.flat { flex: 1; height: 21px; }
.flat select { border: 0; background: linear-gradient(90deg, #efefef calc(100% - 19px), #f6f5f1 0); }
.flat .dd { right: 0; top: 1px; bottom: 1px; }
.services { display: grid; grid-template-columns: minmax(0, 1fr) 137px; gap: 1px; }
.tablebox { border: 1px solid #b9aaa0; border-top: 0; min-width: 0; }
table { width: 100%; table-layout: fixed; border-collapse: collapse; }
.c-mark { width: 11px; }
.c-service { width: 211px; }
.c-cost { width: 152px; }
.c-count { width: 103px; }
.c-sum { width: 95px; }
.c-disc { width: 97px; }
th { height: 22px; padding: 0 2px; border: 1px solid #8b6e60; background: linear-gradient(#f7f5f0, #e8e2d2); text-align: left; font-weight: normal; }
th.strong { color: #0b820b; font-weight: bold; }
th.mark { font-size: 9px; line-height: 9px; padding: 0; text-align: center; color: #7c6254; }
tbody td { height: 64px; padding: 0 0 0 12px; text-align: center; color: #c0b6b1; }
tfoot td { height: 29px; padding: 2px; border-top: 1px solid #8b6e60; border-bottom: 1px solid #8b6e60; background: linear-gradient(#f5f3ec, #e9e1d1); }
tfoot span { display: block; height: 24px; padding: 0 4px; line-height: 22px; border: 1px solid #c9bcb0; border-radius: 2px; background: #efebe1; }
tfoot .open { margin-right: -2px; border-right: 0; }
.inner { height: 18px; }
.inner .thumb { width: 57%; }
.actions { display: flex; flex-direction: column; gap: 3px; padding: 6px 8px 6px 6px; border: 1px solid #e6dccb; border-top: 0; }
.actions .btn { height: 33px; }
.actions .add { height: 41px; margin-bottom: 5px; font-weight: bold; }
.foot { display: flex; gap: 4px; padding: 8px 7px 4px 8px; }
.foot .btn { height: 42px; }
.print { width: 97px; }
.sale { width: 120px; }
.create { width: 152px; margin-left: auto; font-weight: bold; }
.cancel { width: 114px; margin-left: 2px; }
</style>
